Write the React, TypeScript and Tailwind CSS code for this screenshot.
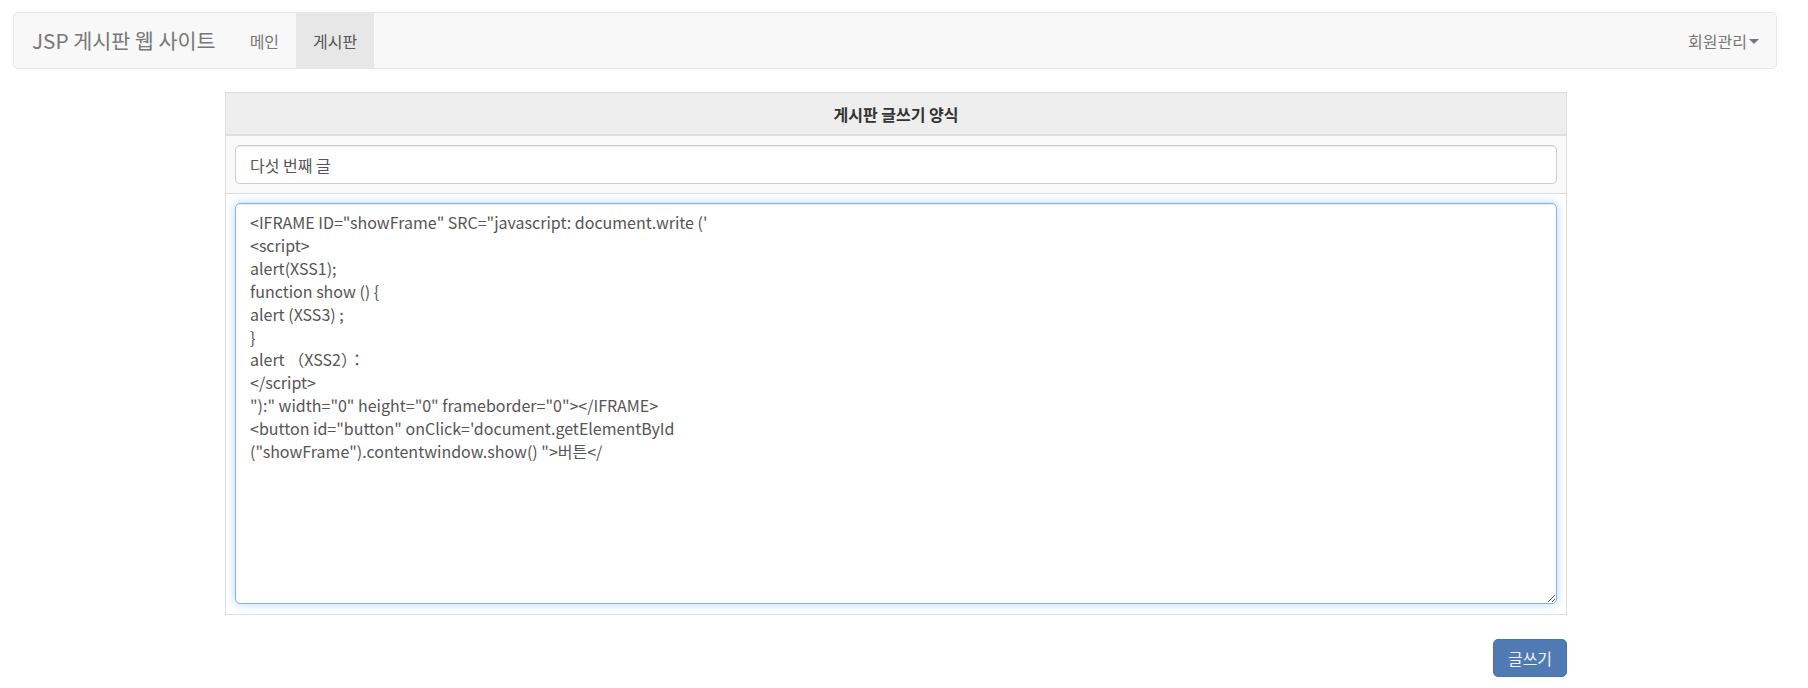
import React from "react";

const font = { fontFamily: '"Noto Sans CJK KR", "Noto Sans", sans-serif' };

const code = `<IFRAME ID="showFrame" SRC="javascript: document.write ('
<script>
alert(XSS1);
function show () {
alert (XSS3) ;
}
alert （XSS2）：
</script>
"):" width="0" height="0" frameborder="0"></IFRAME>
<button id="button" onClick='document.getElementById
("showFrame").contentwindow.show() ">버튼</`;

function Navbar() {
  return (
    <nav className="mt-[12px] ml-[13px] w-[1764px] h-[57px] flex items-stretch bg-[#f8f8f8] border border-[#e7e7e7] rounded-[5px] text-[#777]">
      <a className="flex items-center pl-[18px] pr-[17px] text-[20.7px]">JSP 게시판 웹 사이트</a>
      <ul className="flex items-stretch text-[16px]">
        <li className="flex items-center px-[17px]">메인</li>
        <li className="flex items-center px-[17px] bg-[#e7e7e7] text-[#555]">게시판</li>
      </ul>
      <div className="ml-auto flex items-center pr-[17px] pl-[17px] text-[16px]">
        회원관리
        <span className="ml-[2px] mt-[2px] w-0 h-0 border-l-[5px] border-r-[5px] border-t-[5px] border-l-transparent border-r-transparent border-t-[#777]" />
      </div>
    </nav>
  );
}

export default function App() {
  return (
    <div className="min-h-[688px] bg-white flex flex-col" style={font}>
      <Navbar />

      <div className="ml-[225px] w-[1342px] mt-[23px] flex flex-col">
        <div className="border border-[#ddd]">
          <div className="h-[43px] bg-[#eeeeee] border-b-2 border-[#ddd] flex items-center justify-center text-[16px] font-semibold text-[#333]">
            게시판 글쓰기 양식
          </div>
          <div className="bg-[#f9f9f9] p-[9px] border-b border-[#ddd]">
            <input
              type="text"
              defaultValue="다섯 번째 글"
              className="w-full h-[39px] px-[14px] bg-white border border-[#ccc] rounded-[5px] text-[16px] text-[#555] shadow-[inset_0_1px_1px_rgba(0,0,0,0.075)] outline-none"
              style={font}
            />
          </div>
          <div className="bg-white pt-[9px] pb-[10px] px-[9px]">
            <textarea
              defaultValue={code}
              className="block w-full h-[401px] px-[14px] py-[7px] bg-white border border-[#7fb6e6] rounded-[5px] text-[16px] leading-[22.9px] text-[#555] outline-none shadow-[inset_0_1px_1px_rgba(0,0,0,0.075),0_0_8px_rgba(102,175,233,0.5)]"
              style={font}
            />
          </div>
        </div>

        <div className="flex justify-end mt-[24px]">
          <button className="w-[74px] h-[38px] rounded-[5px] bg-[#4f7ab4] border border-[#4a72a8] text-[#eef2f7] text-[16px]">
            글쓰기
          </button>
        </div>
      </div>
    </div>
  );
}
